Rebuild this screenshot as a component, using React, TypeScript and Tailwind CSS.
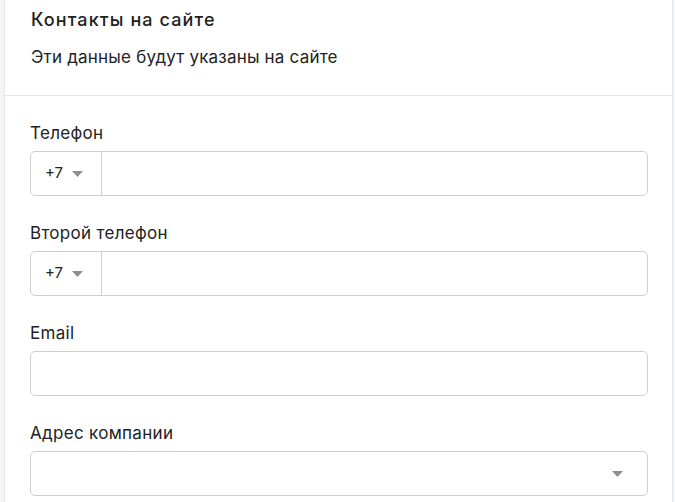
const font = { fontFamily: 'Inter, "Noto Sans", sans-serif' };

function Caret({ className = '' }: { className?: string }) {
  return (
    <svg width="11" height="6" viewBox="0 0 11 6" className={className}>
      <path d="M0 0h11L5.5 6z" fill="#8f8f8f" />
    </svg>
  );
}

function PhoneField({ label }: { label: string }) {
  return (
    <div className="flex flex-col">
      <label className="text-[17px] leading-[22px] tracking-[0.3px] text-[#222]">{label}</label>
      <div className="mt-[7px] flex h-[45px] rounded-[5px] border border-[#cfcfcf] bg-white">
        <div className="flex w-[71px] items-center border-r border-[#cfcfcf] pl-[14px]">
          <span className="text-[15px] text-[#222]">+7</span>
          <Caret className="ml-[9px]" />
        </div>
        <input className="flex-1 bg-transparent px-3 outline-none" />
      </div>
    </div>
  );
}

function TextField({ label, select }: { label: string; select?: boolean }) {
  return (
    <div className="flex flex-col">
      <label className="text-[17px] leading-[22px] tracking-[0.3px] text-[#222]">{label}</label>
      <div className="mt-[7px] flex h-[45px] items-center rounded-[5px] border border-[#cfcfcf] bg-white pr-[24px]">
        <input className="flex-1 bg-transparent px-3 outline-none" />
        {select && <Caret />}
      </div>
    </div>
  );
}

export default function App() {
  return (
    <div className="flex h-[502px] w-[675px] bg-[#f4f5f7] pl-[4px] pr-[2px]" style={font}>
      <div className="flex-1 overflow-hidden border-x border-[#e6e6e6] bg-white">
        {/* Header */}
        <div className="h-[96px] border-b border-[#e6e6e6] px-[26px] pt-[8px]">
          <h2 className="text-[18px] font-medium leading-[24px] tracking-[1.1px] text-[#222]">Контакты на сайте</h2>
          <p className="mt-[13px] text-[17px] leading-[24px] tracking-[0.2px] text-[#222]">Эти данные будут указаны на сайте</p>
        </div>

        {/* Fields */}
        <div className="flex flex-col gap-[26px] pl-[25px] pr-[24px] pt-[26px]">
          <PhoneField label="Телефон" />
          <PhoneField label="Второй телефон" />
          <TextField label="Email" />
          <TextField label="Адрес компании" select />
        </div>
      </div>
    </div>
  );
}
